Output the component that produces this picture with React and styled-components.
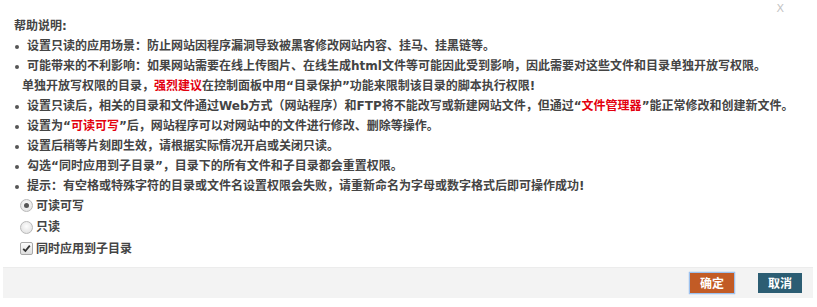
import styled, { createGlobalStyle } from "styled-components";

const GlobalStyle = createGlobalStyle`
  html, body {
    margin: 0;
    padding: 0;
    background: #fff;
  }
  body {
    font-family: "DejaVu Sans", "Noto Sans CJK SC", sans-serif;
    font-size: 12px;
    color: #444;
  }
`;

const Dialog = styled.div`
  position: relative;
  width: 817px;
  height: 307px;
  box-sizing: border-box;
  padding-top: 16px;
  display: flex;
  flex-direction: column;
`;

const Close = styled.span`
  position: absolute;
  top: 2px;
  right: 33px;
  font-family: "DejaVu Sans", sans-serif;
  font-size: 11px;
  line-height: 14px;
  color: #c4c4c4;
  cursor: pointer;
`;

const Body = styled.div`
  padding-left: 14px;
  font-weight: bold;
  line-height: 20px;
`;

const Title = styled.div``;

const Tips = styled.ul`
  list-style: none;
  margin: 0;
  padding: 0;
`;

const Tip = styled.li`
  position: relative;
  padding-left: 13px;

  &::before {
    content: "";
    position: absolute;
    left: 1px;
    top: 9px;
    width: 4px;
    height: 4px;
    border-radius: 50%;
    background: #555;
  }
`;

const More = styled.div`
  margin-left: -5px;
`;

const Red = styled.span`
  color: #e3000e;
`;

const Options = styled.div`
  margin-top: -1px;
  padding-left: 6px;
  display: flex;
  flex-direction: column;
`;

const Option = styled.label`
  display: flex;
  align-items: center;
  gap: 3px;
  height: 21.5px;
  cursor: pointer;
`;

const Radio = styled.span`
  width: 11px;
  height: 11px;
  border-radius: 50%;
  border: 1px solid #b9b9b9;
  background: radial-gradient(circle at 50% 40%, #fdfdfd, #dcdcdc);
  display: flex;
  align-items: center;
  justify-content: center;

  &::after {
    content: "";
    width: 5px;
    height: 5px;
    border-radius: 50%;
    background: ${(p) => (p.$on ? "#555" : "transparent")};
  }
`;

const Check = styled.span`
  width: 11px;
  height: 11px;
  border: 1px solid #a9a9a9;
  border-radius: 2px;
  background: linear-gradient(#fcfcfc, #dedede);
  display: flex;
  align-items: center;
  justify-content: center;
`;

const Footer = styled.div`
  margin: auto 4px 9px 3px;
  height: 30px;
  background: #f3f3f3;
  border-top: 1px solid #ececec;
  display: flex;
  align-items: center;
  justify-content: flex-end;
  gap: 23px;
  padding-right: 11px;
`;

const Button = styled.button`
  height: ${(p) => (p.$primary ? "22px" : "20px")};
  width: ${(p) => (p.$primary ? "46px" : "44px")};
  padding: 0;
  border: ${(p) => (p.$primary ? "1px solid #9cc1ee" : "none")};
  background: ${(p) => (p.$primary ? "#c25b25" : "#2c5d73")};
  box-shadow: ${(p) => (p.$primary ? "0 0 1px #7aa7e8" : "none")};
  color: #fff;
  font-family: "Noto Sans CJK SC", sans-serif;
  font-size: 12px;
  font-weight: bold;
  line-height: 18px;
  cursor: pointer;
`;

export default function App() {
  return (
    <>
      <GlobalStyle />
      <Dialog>
        <Close>X</Close>
        <Body>
          <Title>帮助说明:</Title>
          <Tips>
            <Tip>设置只读的应用场景：防止网站因程序漏洞导致被黑客修改网站内容、挂马、挂黑链等。</Tip>
            <Tip>
              可能带来的不利影响：如果网站需要在线上传图片、在线生成html文件等可能因此受到影响，因此需要对这些文件和目录单独开放写权限。
              <More>
                单独开放写权限的目录，<Red>强烈建议</Red>在控制面板中用“目录保护”功能来限制该目录的脚本执行权限!
              </More>
            </Tip>
            <Tip>
              设置只读后，相关的目录和文件通过Web方式（网站程序）和FTP将不能改写或新建网站文件，但通过“<Red>文件管理器</Red>”能正常修改和创建新文件。
            </Tip>
            <Tip>
              设置为“<Red>可读可写</Red>”后，网站程序可以对网站中的文件进行修改、删除等操作。
            </Tip>
            <Tip>设置后稍等片刻即生效，请根据实际情况开启或关闭只读。</Tip>
            <Tip>勾选“同时应用到子目录”，目录下的所有文件和子目录都会重置权限。</Tip>
            <Tip>提示：有空格或特殊字符的目录或文件名设置权限会失败，请重新命名为字母或数字格式后即可操作成功!</Tip>
          </Tips>
          <Options>
            <Option>
              <Radio $on />
              可读可写
            </Option>
            <Option>
              <Radio />
              只读
            </Option>
            <Option>
              <Check>
                <svg width="9" height="9" viewBox="0 0 9 9">
                  <path d="M1.2 4.8 L3.4 7 L7.8 1.6" fill="none" stroke="#333" strokeWidth="1.8" />
                </svg>
              </Check>
              同时应用到子目录
            </Option>
          </Options>
        </Body>
        <Footer>
          <Button $primary>确定</Button>
          <Button>取消</Button>
        </Footer>
      </Dialog>
    </>
  );
}
